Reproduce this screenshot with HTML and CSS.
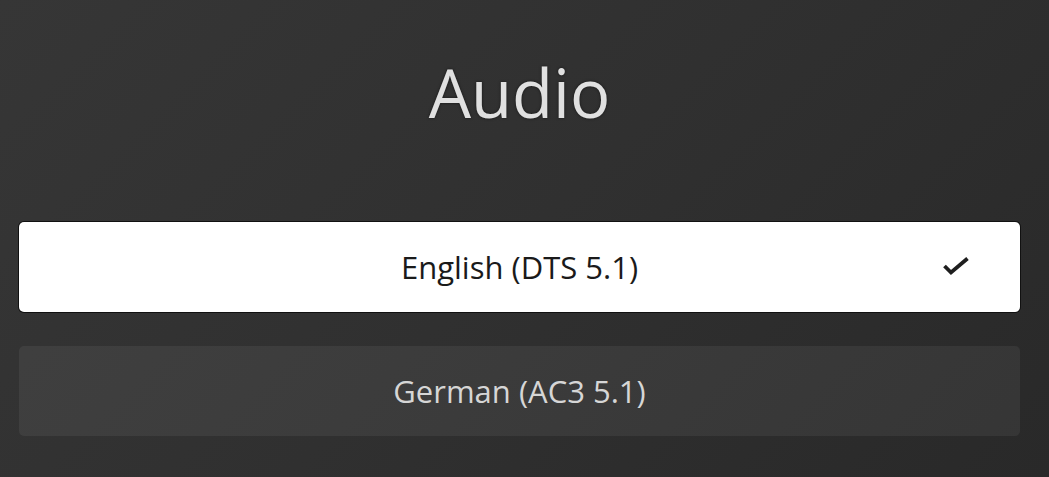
FILE: index.html
```html
<!DOCTYPE html>
<html>
<head>
<meta charset="utf-8">
<link rel="stylesheet" href="styles.css">
</head>
<body>
<div class="dialog">
  <h1 class="title">Audio</h1>
  <div class="options">
    <button class="option selected">
      <span class="label">English (DTS 5.1)</span>
      <svg class="check" viewBox="0 0 32 24" width="32" height="24"><path d="M4.5 11 L11 17.5 L27.5 3.5" fill="none" stroke="#1e1e1e" stroke-width="3.8" stroke-linecap="butt" stroke-linejoin="miter"/></svg>
    </button>
    <button class="option">
      <span class="label">German (AC3 5.1)</span>
    </button>
  </div>
</div>
</body>
</html>
```

FILE: styles.css
```css
html, body {
  margin: 0;
  height: 100%;
}
body {
  background: linear-gradient(135deg, #363636 0%, #303030 50%, #292929 100%);
  font-family: "Open Sans", sans-serif;
  overflow: hidden;
}
.dialog {
  padding: 0 29px 0 19px;
}
.title {
  margin: 0;
  padding-top: 46px;
  height: 222px;
  box-sizing: border-box;
  text-align: center;
  font-weight: 400;
  font-size: 67px;
  line-height: 1.4;
  color: #e0e0e0;
  text-shadow: 0 0 3px rgba(0,0,0,0.6);
}
.options {
  display: flex;
  flex-direction: column;
  gap: 34px;
}
.option {
  position: relative;
  display: flex;
  align-items: center;
  justify-content: center;
  height: 90px;
  border: none;
  border-radius: 5px;
  background: rgba(255,255,255,0.06);
  color: #d6d6d6;
  font-family: "Open Sans", sans-serif;
  font-size: 31px;
  padding: 0;
}
.option.selected {
  background: #fff;
  color: #1a1a1a;
  box-shadow: 0 0 0 1px #111;
}
.check {
  position: absolute;
  right: 48px;
  top: 33px;
}
```
